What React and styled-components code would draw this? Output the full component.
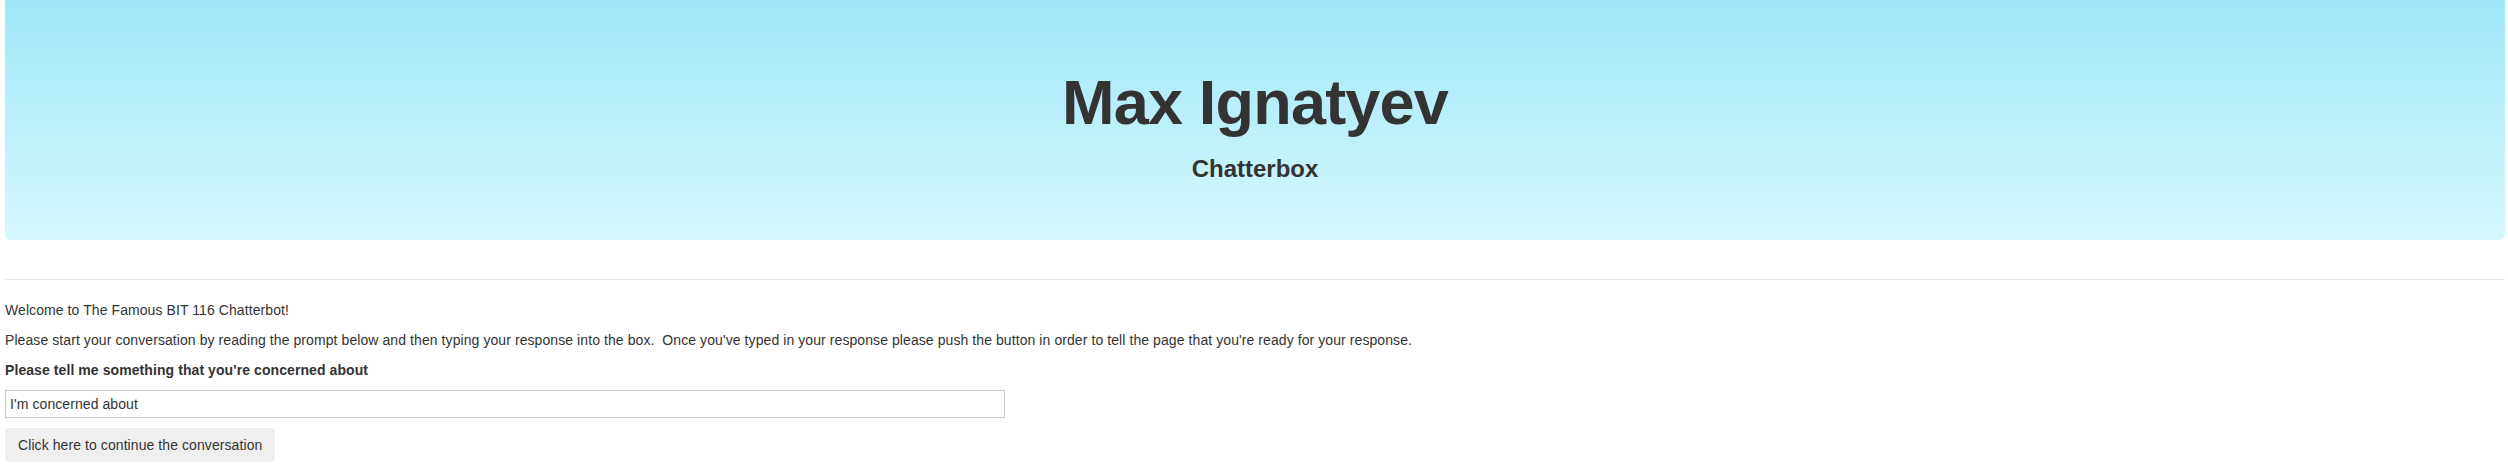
import React from "react";
import styled, { createGlobalStyle } from "styled-components";

const GlobalStyle = createGlobalStyle`
  html, body {
    margin: 0;
    padding: 0;
    background: #ffffff;
  }
  body {
    font-family: "Liberation Sans", Arial, Helvetica, sans-serif;
    font-size: 14px;
    line-height: 20px;
    letter-spacing: 0.08px;
    color: #333333;
  }
  * { box-sizing: border-box; }
`;

const Page = styled.div`
  padding: 0 3px 0 5px;
  overflow: hidden;
`;

const Jumbotron = styled.header`
  margin-top: -5px;
  padding: 73px 20px 58px;
  border-radius: 6px;
  background: linear-gradient(to bottom, #9ee7f8 0%, #d6f8fd 100%);
  display: flex;
  flex-direction: column;
  align-items: center;
  text-align: center;
`;

const Title = styled.h1`
  margin: 0;
  font-size: 63px;
  line-height: 69px;
  font-weight: 700;
  letter-spacing: -0.8px;
  color: #333333;
`;

const Subtitle = styled.h3`
  margin: 19px 0 0;
  font-size: 24px;
  line-height: 26px;
  font-weight: 700;
  letter-spacing: 0;
  color: #333333;
`;

const Divider = styled.hr`
  margin: 39px 0 20px;
  border: 0;
  border-top: 1px solid #e9e9e9;
  height: 0;
`;

const Paragraph = styled.p`
  margin: 0 0 10px;
  font-weight: ${(p) => (p.$bold ? 700 : 400)};
  white-space: pre-wrap;
`;

const Form = styled.form`
  display: flex;
  flex-direction: column;
  align-items: flex-start;
  gap: 10px;
`;

const TextInput = styled.input`
  width: 1000px;
  height: 28px;
  padding: 0 4px;
  border: 1px solid #c9c9c9;
  border-radius: 0;
  font-family: "Liberation Sans", Arial, Helvetica, sans-serif;
  font-size: 14px;
  letter-spacing: 0.08px;
  color: #333333;
  background: #ffffff;
  outline: none;
`;

const Button = styled.button`
  height: 34px;
  padding: 6px 12px;
  border: 1px solid #efefef;
  border-radius: 4px;
  background: #efefef;
  font-family: "Liberation Sans", Arial, Helvetica, sans-serif;
  font-size: 14px;
  line-height: 20px;
  letter-spacing: 0.08px;
  color: #333333;
  cursor: pointer;
`;

export default function App() {
  return (
    <>
      <GlobalStyle />
      <Page>
        <Jumbotron>
          <Title>Max Ignatyev</Title>
          <Subtitle>Chatterbox</Subtitle>
        </Jumbotron>
        <Divider />
        <Paragraph>Welcome to The Famous BIT 116 Chatterbot!</Paragraph>
        <Paragraph>
          {"Please start your conversation by reading the prompt below and then typing your response into the box.  Once you've typed in your response please push the button in order to tell the page that you're ready for your response."}
        </Paragraph>
        <Paragraph $bold>Please tell me something that you're concerned about</Paragraph>
        <Form onSubmit={(e) => e.preventDefault()}>
          <TextInput type="text" defaultValue="I'm concerned about" />
          <Button type="button">Click here to continue the conversation</Button>
        </Form>
      </Page>
    </>
  );
}
